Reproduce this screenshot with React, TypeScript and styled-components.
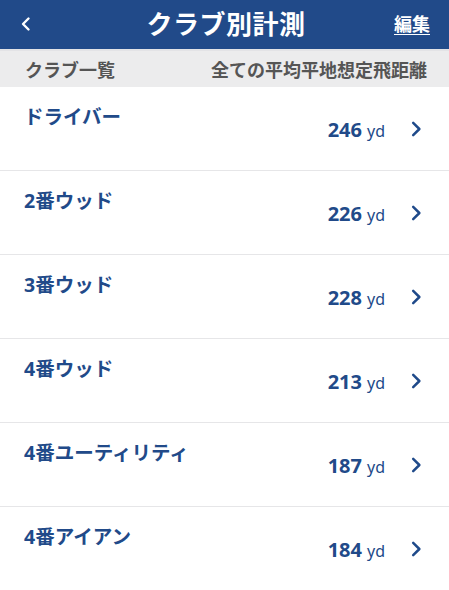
import styled, { createGlobalStyle } from 'styled-components';

const clubs = [
	{ name: 'ドライバー', distance: 246 },
	{ name: '2番ウッド', distance: 226 },
	{ name: '3番ウッド', distance: 228 },
	{ name: '4番ウッド', distance: 213 },
	{ name: '4番ユーティリティ', distance: 187 },
	{ name: '4番アイアン', distance: 184 },
];

const GlobalStyle = createGlobalStyle`
	body {
		margin: 0;
		background: #ffffff;
		font-family: 'Noto Sans', 'Noto Sans CJK JP', sans-serif;
	}
`;

const Chevron = ({ color, size, stroke }: { color: string; size: number; stroke: number }) => (
	<svg width={size} height={size} viewBox="0 0 16 16" fill="none">
		<path d="M5.5 2.5 L11 8 L5.5 13.5" stroke={color} strokeWidth={stroke} strokeLinecap="round" strokeLinejoin="round" />
	</svg>
);

const App = () => {
	return (
		<>
			<GlobalStyle />
			<Screen>
				<Header>
					<BackButton>
						<svg width="16" height="16" viewBox="0 0 16 16" fill="none">
							<path d="M10.5 2.5 L5 8 L10.5 13.5" stroke="#ffffff" strokeWidth={2.4} strokeLinecap="round" strokeLinejoin="round" />
						</svg>
					</BackButton>
					<Title>クラブ別計測</Title>
					<EditLink>編集</EditLink>
				</Header>
				<SubHeader>
					<SubLabel>クラブ一覧</SubLabel>
					<SubLabel>全ての平均平地想定飛距離</SubLabel>
				</SubHeader>
				<List>
					{clubs.map((club) => (
						<Row key={club.name}>
							<ClubName>{club.name}</ClubName>
							<RowRight>
								<Distance>
									<Number>{club.distance}</Number>
									<Unit>yd</Unit>
								</Distance>
								<Chevron color="#1f4a8a" size={18} stroke={2.2} />
							</RowRight>
						</Row>
					))}
				</List>
			</Screen>
		</>
	);
};

const Screen = styled.div`
	width: 449px;
	height: 590px;
	overflow: hidden;
	background: #ffffff;
`;

const Header = styled.div`
	height: 49px;
	background: #214a89;
	display: grid;
	grid-template-columns: 1fr auto 1fr;
	align-items: center;
	padding: 0 19px 0 18px;
	border-bottom: 2px solid #e3e3e6;
`;

const BackButton = styled.div`
	display: flex;
	align-items: center;
	margin-top: -2px;
`;

const Title = styled.h1`
	margin: 0 0 4px 4px;
	color: #ffffff;
	font-size: 26px;
	font-weight: 600;
	letter-spacing: 0.5px;
`;

const EditLink = styled.span`
	justify-self: end;
	color: #ffffff;
	font-size: 18px;
	font-weight: 700;
	text-decoration: underline;
	text-underline-offset: 3px;
	margin-bottom: 3px;
`;

const SubHeader = styled.div`
	height: 36px;
	background: #ececed;
	display: flex;
	align-items: center;
	justify-content: space-between;
	padding: 0 22px 0 25px;
`;

const SubLabel = styled.span`
	color: #555555;
	font-size: 18px;
	font-weight: 700;
`;

const List = styled.div`
	display: flex;
	flex-direction: column;
`;

const Row = styled.div`
	height: 84px;
	box-sizing: border-box;
	border-bottom: 1px solid #e6e6e8;
	display: flex;
	justify-content: space-between;
	padding: 0 24px 0 24px;
`;

const ClubName = styled.span`
	margin-top: 14px;
	color: #214a89;
	font-size: 19.5px;
	font-weight: 700;
`;

const RowRight = styled.div`
	display: flex;
	align-items: center;
	gap: 22px;
	margin-top: 22px;
	height: 40px;
`;

const Distance = styled.span`
	display: flex;
	align-items: baseline;
	gap: 5px;
	color: #214a89;
`;

const Number = styled.span`
	font-size: 20px;
	font-weight: 700;
`;

const Unit = styled.span`
	font-size: 16px;
	font-weight: 400;
`;

export default App;
